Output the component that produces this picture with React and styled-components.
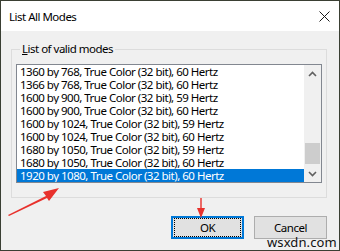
import React from 'react'
import styled, { createGlobalStyle } from 'styled-components'

const Global = createGlobalStyle`
  html, body { margin:0; padding:0; background:#f0f0f0; }
  * { box-sizing:border-box; }
`

const modes = [
  '1360 by 768, True Color (32 bit), 60 Hertz',
  '1366 by 768, True Color (32 bit), 60 Hertz',
  '1600 by 900, True Color (32 bit), 59 Hertz',
  '1600 by 900, True Color (32 bit), 60 Hertz',
  '1600 by 1024, True Color (32 bit), 59 Hertz',
  '1600 by 1024, True Color (32 bit), 60 Hertz',
  '1680 by 1050, True Color (32 bit), 59 Hertz',
  '1680 by 1050, True Color (32 bit), 60 Hertz',
  '1920 by 1080, True Color (32 bit), 60 Hertz',
]

function App() {
  return (
    <>
      <Global />
      <Window>
        <TitleBar>
          <Title>List All Modes</Title>
          <Close>
            <svg width="11" height="11" viewBox="0 0 11 11">
              <path d="M0.5 0.5 L10.5 10.5 M10.5 0.5 L0.5 10.5" stroke="#1a1a1a" strokeWidth="1" />
            </svg>
          </Close>
        </TitleBar>
        <Body>
          <Group>
            <Legend><u>L</u>ist of valid modes</Legend>
            <ListBox>
              <Rows>
                {modes.map((m, i) => (
                  <Row key={m} selected={i === modes.length - 1}>{m}</Row>
                ))}
              </Rows>
              <ScrollBar>
                <ArrowBtn>
                  <svg width="9" height="6" viewBox="0 0 9 6">
                    <path d="M1 5 L4.5 1.5 L8 5" fill="none" stroke="#606060" strokeWidth="1.6" />
                  </svg>
                </ArrowBtn>
                <Track>
                  <Thumb />
                </Track>
                <ArrowBtn>
                  <svg width="9" height="6" viewBox="0 0 9 6">
                    <path d="M1 1 L4.5 4.5 L8 1" fill="none" stroke="#606060" strokeWidth="1.6" />
                  </svg>
                </ArrowBtn>
              </ScrollBar>
            </ListBox>
          </Group>
          <Buttons>
            <Button primary><Focus>OK</Focus></Button>
            <Button>Cancel</Button>
          </Buttons>
        </Body>
        <ArrowMark viewBox="0 0 60 34" width="60" height="34" style={{ left: 5, top: 183 }}>
          <path d="M2 31 L40 12 L37 8 L53 4 L43 17 L41 14 L3 32 Z" fill="#e8312c" />
        </ArrowMark>
        <ArrowMark viewBox="0 0 10 22" width="10" height="22" style={{ left: 195, top: 196 }}>
          <path d="M4.3 1 L5.7 1 L5.7 11 L9 11 L5 21 L1 11 L4.3 11 Z" fill="#e8312c" />
        </ArrowMark>
        <Watermark>wsxdn.com</Watermark>
      </Window>
    </>
  )
}

export default App

const Window = styled.div`
  position:relative;
  width:340px;
  height:251px;
  border:1px solid #3a3f33;
  background:#f0f0f0;
  font-family:"Noto Sans", "Open Sans", sans-serif;
  font-size:11.5px;
  letter-spacing:-0.5px;
  color:#000;
  display:flex;
  flex-direction:column;
`

const TitleBar = styled.div`
  height:30px;
  background:#fff;
  display:flex;
  align-items:center;
  justify-content:space-between;
  padding:0 9px 0 8px;
`

const Title = styled.div`
  font-size:11.5px;
`

const Close = styled.div`
  display:flex;
  padding-top:1px;
`

const Body = styled.div`
  flex:1;
  padding:11px 12px 0 10px;
  display:flex;
  flex-direction:column;
`

const Group = styled.fieldset`
  margin:0;
  border:1px solid #dcdcdc;
  padding:8px 4px 14px 4px;
  min-width:0;
`

const Legend = styled.legend`
  padding:0 2px;
  margin-left:4px;
  line-height:14px;
`

const ListBox = styled.div`
  display:flex;
  height:119px;
  border:1px solid #828790;
  background:#fff;
`

const Rows = styled.div`
  flex:1;
  display:flex;
  flex-direction:column;
`

const Row = styled.div`
  height:13px;
  line-height:13px;
  padding-left:3px;
  white-space:nowrap;
  overflow:hidden;
  background:${p => (p.selected ? '#0078d7' : 'transparent')};
  color:${p => (p.selected ? '#fff' : '#000')};
`

const ScrollBar = styled.div`
  width:17px;
  background:#f0f0f0;
  display:flex;
  flex-direction:column;
`

const ArrowBtn = styled.div`
  height:17px;
  display:flex;
  align-items:center;
  justify-content:center;
`

const Track = styled.div`
  flex:1;
  display:flex;
  flex-direction:column;
  justify-content:flex-end;
  padding:0 1px 1px;
`

const Thumb = styled.div`
  height:21px;
  background:#cdcdcd;
`

const Buttons = styled.div`
  display:flex;
  justify-content:flex-end;
  gap:10px;
  margin-top:18px;
`

const Button = styled.div`
  width:73px;
  height:23px;
  display:flex;
  align-items:center;
  justify-content:center;
  background:#e1e1e1;
  border:${p => (p.primary ? '2px solid #0078d7' : '1px solid #adadad')};
`

const Focus = styled.div`
  width:100%;
  height:100%;
  margin:1px;
  border:1px dotted #000;
  display:flex;
  align-items:center;
  justify-content:center;
`

const ArrowMark = styled.svg`
  position:absolute;
`

const Watermark = styled.div`
  position:absolute;
  left:266px;
  top:232px;
  font-size:13px;
  letter-spacing:0.1px;
  color:#111;
`
